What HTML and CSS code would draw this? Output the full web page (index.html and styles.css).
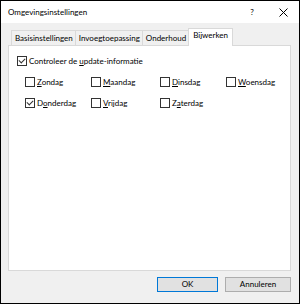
FILE: index.html
```html
<!DOCTYPE html>
<html lang="nl">
<head>
    <meta charset="UTF-8">
    <title>Omgevingsinstellingen</title>
    <link rel="stylesheet" href="styles.css">
</head>
<body>
    <div class="window">
        <!-- titelbalk -->
        <div class="titlebar">
            <span class="title">Omgevingsinstellingen</span>
            <span class="tb-help">?</span>
            <span class="tb-close">
                <svg width="9" height="9" viewBox="0 0 9 9"><path d="M0.5 0.5 L8.5 8.5 M8.5 0.5 L0.5 8.5" stroke="#000" stroke-width="1" fill="none"/></svg>
            </span>
        </div>

        <div class="content">
            <!-- tabbladen -->
            <div class="tabs">
                <div class="tab">Basisinstellingen</div>
                <div class="tab">Invoegtoepassing</div>
                <div class="tab">Onderhoud</div>
                <div class="tab tab-active">Bijwerken</div>
            </div>

            <div class="panel">
                <label class="check check-main"><span class="box checked"></span><span>Controleer de <u>u</u>pdate-informatie</span></label>
                <div class="days">
                    <label class="check"><span class="box"></span><span><u>Z</u>ondag</span></label>
                    <label class="check"><span class="box"></span><span><u>M</u>aandag</span></label>
                    <label class="check"><span class="box"></span><span><u>D</u>insdag</span></label>
                    <label class="check"><span class="box"></span><span><u>W</u>oensdag</span></label>
                    <label class="check"><span class="box checked"></span><span>D<u>o</u>nderdag</span></label>
                    <label class="check"><span class="box"></span><span><u>V</u>rijdag</span></label>
                    <label class="check"><span class="box"></span><span>Z<u>a</u>terdag</span></label>
                </div>
            </div>

            <div class="buttons">
                <button class="btn btn-default">OK</button>
                <button class="btn btn-cancel">Annuleren</button>
            </div>
        </div>
    </div>
</body>
</html>
```

FILE: styles.css
```css
body {
    margin: 0;
    font-family: Lato, "Open Sans", sans-serif;
    font-size: 8px;
    color: #000;
    background: #fff;
}
.window {
    width: 300px;
    height: 304px;
    box-sizing: border-box;
    border: 1px solid #000;
    background: #f0f0f0;
    display: flex;
    flex-direction: column;
}
/* titelbalk */
.titlebar {
    height: 22px;
    background: #fff;
    display: flex;
    align-items: center;
    padding-left: 7px;
    flex-shrink: 0;
}
.title {
    flex: 1;
}
.tb-help {
    width: 10px;
    margin-right: 22px;
    text-align: center;
}
.tb-close {
    width: 9px;
    margin-right: 11px;
    display: flex;
}
/* inhoud */
.content {
    flex: 1;
    padding: 5px 8px 11px 7px;
    display: flex;
    flex-direction: column;
}
.tabs {
    display: flex;
    align-items: flex-end;
    height: 17px;
    padding-left: 3px;
    position: relative;
    z-index: 1;
}
.tab {
    height: 15px;
    line-height: 14px;
    padding: 0 2px 0 3px;
    border: 1px solid #d9d9d9;
    border-bottom: none;
    border-right: none;
    background: #f0f0f0;
    box-sizing: border-box;
}
.tab:nth-child(3) {
    border-right: 1px solid #d9d9d9;
}
.tab-active {
    height: 18px;
    line-height: 13px;
    background: #fff;
    border-right: 1px solid #d9d9d9;
    margin-left: -1px;
    padding: 0 4px;
    margin-bottom: -1px;
}
.panel {
    flex: 1;
    background: #fff;
    border: 1px solid #d9d9d9;
    padding: 9px 0 0 8px;
}
.check {
    display: flex;
    align-items: center;
    height: 12px;
    white-space: nowrap;
}
.box {
    width: 10px;
    height: 10px;
    box-sizing: border-box;
    border: 1px solid #333;
    background: #fff;
    margin-right: 2px;
    position: relative;
    flex-shrink: 0;
}
.checked::after {
    content: "";
    position: absolute;
    left: 2px;
    top: 0;
    width: 3px;
    height: 5px;
    border: solid #333;
    border-width: 0 1px 1px 0;
    transform: rotate(45deg);
}
.days {
    display: grid;
    grid-template-columns: 66px 69px 66px auto;
    row-gap: 9px;
    padding: 9px 0 0 8px;
}
.buttons {
    display: flex;
    justify-content: flex-end;
    gap: 7px;
    padding-top: 6px;
}
.btn {
    height: 15px;
    font-family: inherit;
    font-size: 8px;
    background: #e1e1e1;
    border: 1px solid #adadad;
    padding: 0;
    line-height: 13px;
}
.btn-default {
    width: 61px;
    border-color: #0078d7;
}
.btn-cancel {
    width: 66px;
}
```
